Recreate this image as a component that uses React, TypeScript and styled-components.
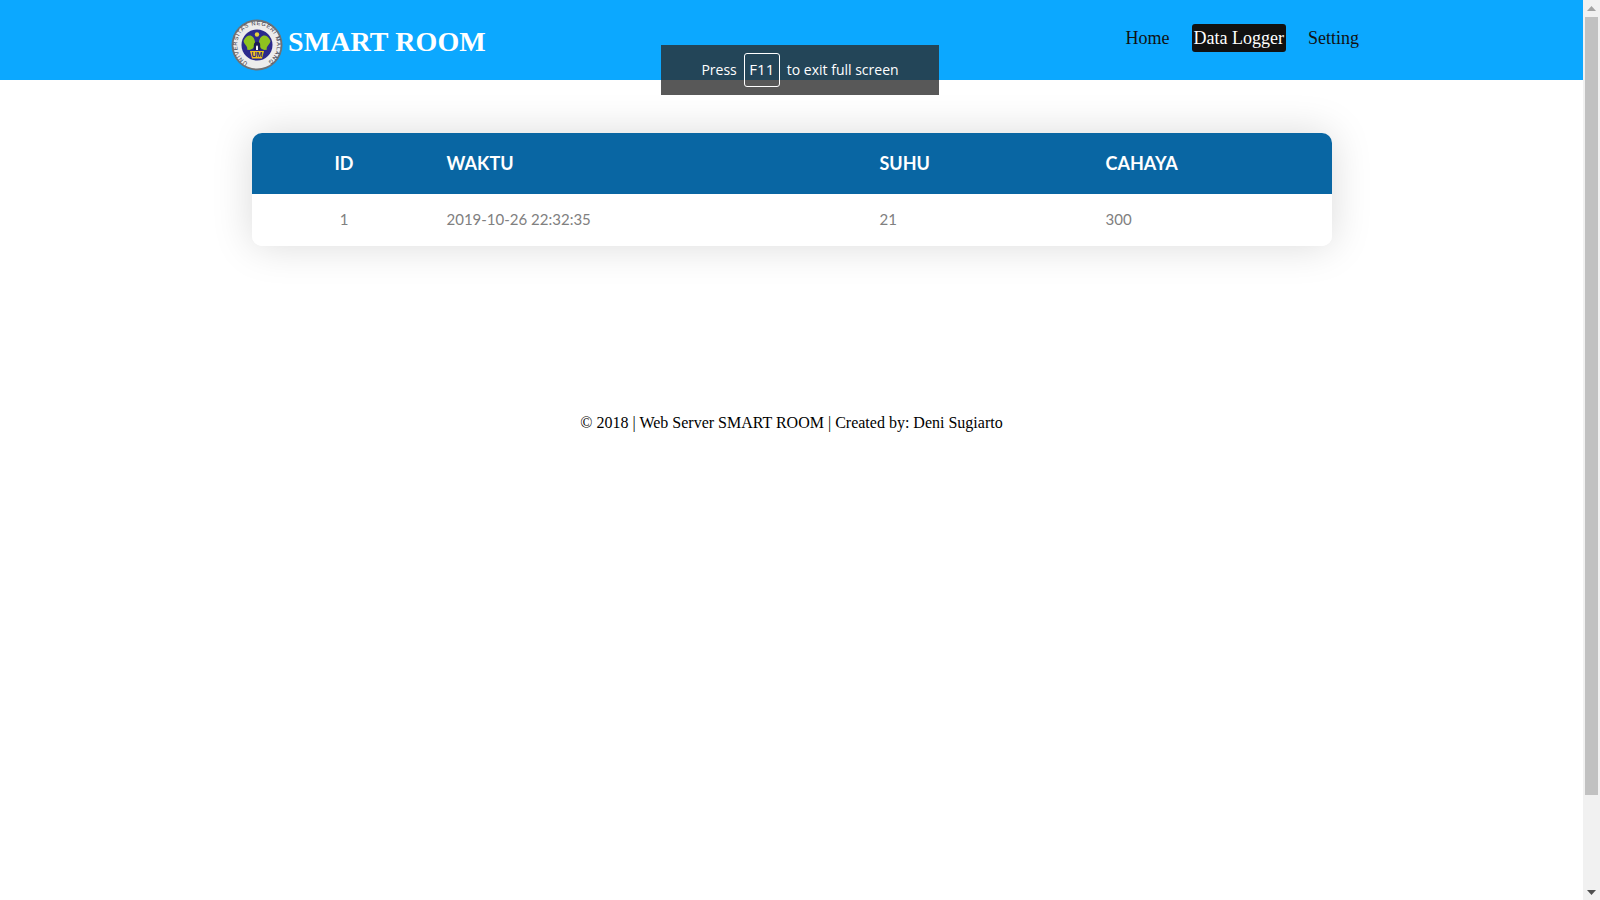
import styled, { createGlobalStyle } from "styled-components";

const GlobalStyle = createGlobalStyle`
  html, body {
    margin: 0;
    padding: 0;
    height: 100%;
    overflow: hidden;
    background: #fff;
    font-family: "Liberation Serif", serif;
  }
  * {
    box-sizing: border-box;
  }
`;
const Screen = styled.div`
  display: flex;
  height: 900px;
  position: relative;
`;
const Page = styled.div`
  flex: 1;
  min-width: 0;
`;
const Header = styled.header`
  height: 80px;
  background-color: #0ca8ff;
  padding: 0 222px 0 231px;
  display: flex;
  justify-content: space-between;
`;
const Brand = styled.div`
  display: flex;
  align-items: center;
  gap: 5px;
  height: 89px;
`;
const BrandName = styled.h1`
  margin: 0;
  font-size: 28px;
  font-weight: bold;
  color: #fff;
  letter-spacing: 0.1px;
  position: relative;
  top: -3px;
`;
const Links = styled.nav`
  display: flex;
  align-items: flex-start;
  gap: 20px;
  padding-top: 24px;
`;
const NavLink = styled.a<{ $active?: boolean }>`
  height: 28px;
  line-height: 28px;
  padding: 0 2px;
  font-size: 18px;
  border-radius: 3px;
  color: ${(p) => (p.$active ? "#fff" : "#111")};
  background-color: ${(p) => (p.$active ? "#111" : "transparent")};
`;
const Card = styled.section`
  width: 1080px;
  margin: 53px 0 0 252px;
  border-radius: 10px;
  background: #fff;
  overflow: hidden;
  box-shadow: 0 0 40px rgba(0, 0, 0, 0.15);
  font-family: Lato, sans-serif;
`;
const Row = styled.div<{ $head?: boolean }>`
  display: grid;
  grid-template-columns: 184px 433px 226px 1fr;
  align-items: center;
  height: ${(p) => (p.$head ? "61px" : "52px")};
  padding-bottom: 2px;
  background-color: ${(p) => (p.$head ? "#0966a3" : "#fff")};
  color: ${(p) => (p.$head ? "#fff" : "#808080")};
  font-size: ${(p) => (p.$head ? "18px" : "15px")};
  font-weight: ${(p) => (p.$head ? "bold" : "normal")};
`;
const Cell = styled.div<{ $center?: boolean }>`
  padding-left: ${(p) => (p.$center ? "0" : "10.5px")};
  text-align: ${(p) => (p.$center ? "center" : "left")};
`;
const Footer = styled.footer`
  margin-top: 168px;
  text-align: center;
  font-size: 16px;
  line-height: 18px;
  color: #000;
`;
const Notice = styled.div`
  position: absolute;
  top: 45px;
  left: 661px;
  width: 278px;
  height: 50px;
  padding-top: 8px;
  background-color: rgba(42, 42, 42, 0.786);
  color: #fff;
  font-family: "Open Sans", sans-serif;
  font-size: 14px;
  display: flex;
  justify-content: center;
  gap: 7px;
`;
const NoticeText = styled.span`
  line-height: 33px;
`;
const Key = styled.span`
  width: 36px;
  height: 34px;
  line-height: 31px;
  font-size: 15px;
  text-align: center;
  border: 1px solid #fff;
  border-radius: 3px;
`;
const ScrollBar = styled.div`
  width: 17px;
  background-color: #f1f1f1;
  display: flex;
  flex-direction: column;
  align-items: center;
`;
const ArrowBox = styled.div`
  height: 17px;
  width: 17px;
  display: flex;
  align-items: center;
  justify-content: center;
  flex-shrink: 0;
`;
const Thumb = styled.div`
  width: 13px;
  height: 778px;
  background-color: #c1c1c1;
`;
const Spacer = styled.div`
  flex: 1;
`;

const Logo = () => (
  <svg width="52" height="52" viewBox="0 0 52 52">
    <defs>
      <path id="logoRing" d="M16.8 43.6 A19.9 19.9 0 1 1 35.2 43.6" />
    </defs>
    <circle cx="26" cy="26" r="25.5" fill="#6f7276" />
    <circle cx="26" cy="26" r="23.6" fill="#ececec" />
    <text fontFamily="Liberation Sans, sans-serif" fontSize="5.6" fill="#2a2a3a">
      <textPath href="#logoRing" textLength="103">
        UNIVERSITAS NEGERI MALANG
      </textPath>
    </text>
    <circle cx="26" cy="26" r="15.5" fill="#2b2a8c" />
    <path d="M12.5 22 C16 14 23 15 24 23 C24.5 29 20 32 16 30.5 C17.5 28 13.5 26 12.5 22Z" fill="#8fc31f" />
    <path d="M39.5 22 C36 14 29 15 28 23 C27.5 29 32 32 36 30.5 C34.5 28 38.5 26 39.5 22Z" fill="#8fc31f" />
    <circle cx="26" cy="15.5" r="2.2" fill="#e8d33a" />
    <path d="M22.8 31 V26 A3.2 3.2 0 0 1 29.2 26 V31Z" fill="#1c1c55" />
    <path d="M25 31 V27.5 A1 1 0 0 1 27 27.5 V31Z" fill="#fff" />
    <path d="M19 32 H33 L31 39.5 H21Z" fill="#f5c518" />
    <text x="26" y="38.4" textAnchor="middle" fontFamily="Liberation Sans, sans-serif" fontSize="7" fontWeight="bold" fill="#2b2a8c">
      UM
    </text>
  </svg>
);

export default function App() {
  return (
    <>
      <GlobalStyle />
      <Screen>
        <Page>
          <Header>
            <Brand>
              <Logo />
              <BrandName>SMART ROOM</BrandName>
            </Brand>
            <Links>
              <NavLink>Home</NavLink>
              <NavLink $active>Data Logger</NavLink>
              <NavLink>Setting</NavLink>
            </Links>
          </Header>
          <Card>
            <Row $head>
              <Cell $center>ID</Cell>
              <Cell>WAKTU</Cell>
              <Cell>SUHU</Cell>
              <Cell>CAHAYA</Cell>
            </Row>
            <Row>
              <Cell $center>1</Cell>
              <Cell>2019-10-26 22:32:35</Cell>
              <Cell>21</Cell>
              <Cell>300</Cell>
            </Row>
          </Card>
          <Footer>© 2018 | Web Server SMART ROOM | Created by: Deni Sugiarto</Footer>
        </Page>
        <ScrollBar>
          <ArrowBox>
            <svg width="9" height="6" viewBox="0 0 9 6">
              <path d="M4.5 0 L9 5 H0Z" fill="#a3a3a3" />
            </svg>
          </ArrowBox>
          <Thumb />
          <Spacer />
          <ArrowBox>
            <svg width="9" height="6" viewBox="0 0 9 6">
              <path d="M0 1 H9 L4.5 6Z" fill="#505050" />
            </svg>
          </ArrowBox>
        </ScrollBar>
        <Notice>
          <NoticeText>Press</NoticeText>
          <Key>F11</Key>
          <NoticeText>to exit full screen</NoticeText>
        </Notice>
      </Screen>
    </>
  );
}
